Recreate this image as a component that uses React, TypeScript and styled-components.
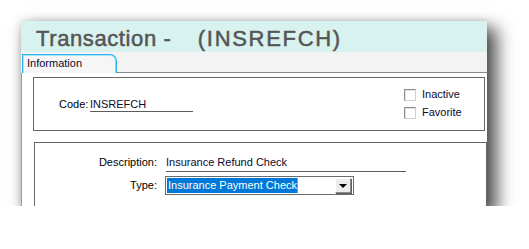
import React from "react";
import styled, { createGlobalStyle } from "styled-components";

const Global = createGlobalStyle`
  html, body { margin: 0; padding: 0; background: #ffffff; }
  body { font-family: "Liberation Sans", Arial, sans-serif; }
  * { box-sizing: border-box; }
`;

const Page = styled.div`
  padding: 21px 0 0 21px;
`;

const Window = styled.div`
  width: 466px;
  height: 185px;
  background: #ffffff;
  overflow: hidden;
  display: flex;
  flex-direction: column;
  box-shadow: 8px 9px 16px 2px rgba(0, 0, 0, 0.68), 0 0 7px rgba(0, 0, 0, 0.14);
`;

const TitleBar = styled.div`
  height: 31px;
  flex: none;
  background: #d8f2ef;
  padding: 4px 0 0 15px;
`;

const Title = styled.h1`
  margin: 0;
  font-family: "Liberation Sans", Arial, sans-serif;
  font-weight: 400;
  font-size: 22px;
  line-height: 27px;
  letter-spacing: 0.6px;
  color: #555555;
  -webkit-text-stroke: 0.5px #555555;
  white-space: pre;
`;

const TitleCode = styled.span`
  letter-spacing: 1.7px;
  margin-left: 13px;
`;

const TabStrip = styled.div`
  height: 21px;
  flex: none;
  display: flex;
  align-items: flex-end;
  background: #f3f3f3;
  padding-left: 1px;
`;

const Tab = styled.div`
  width: 95px;
  height: 19px;
  background: #f6f6f6;
  border: 1px solid #2bb3ea;
  border-bottom: none;
  border-top-right-radius: 7px;
  box-shadow: inset 1px 1px 0 #a6e6fa, inset -1px 0 0 #7dd6f5;
  padding: 2px 0 0 4px;
  font-size: 11px;
  line-height: 13px;
  color: #0a0a30;
`;

const StripFill = styled.div`
  flex: 1;
  height: 21px;
  border-bottom: 1px solid #8a8a8a;
`;

const Panel = styled.div`
  flex: 1;
  display: flex;
  flex-direction: column;
  gap: 11px;
  padding: 4px 0 0 11px;
  border-left: 1px solid #9c9c9c;
  background: #ffffff;
`;

const GroupBox = styled.div<{ $height: number; $shift?: number }>`
  width: ${(p) => 452 + (p.$shift ?? 0)}px;
  height: ${(p) => p.$height}px;
  flex: none;
  margin-left: ${(p) => p.$shift ?? 0}px;
  border: 1px solid #676767;
  font-size: 11px;
  line-height: 13px;
  color: #0a0a30;
`;

const CodeBox = styled(GroupBox)`
  display: flex;
`;

const CodeRow = styled.div`
  display: flex;
  align-items: flex-start;
  padding: 20px 0 0 25px;
`;

const CodeLabel = styled.span`
  width: 31px;
  color: #000000;
`;

const LineValue = styled.div<{ $width: number }>`
  width: ${(p) => p.$width}px;
  padding-bottom: 2px;
  border-bottom: 1px solid #5c5c5c;
`;

const CodeValue = styled(LineValue)`
  padding-bottom: 0;
`;

const CheckList = styled.div`
  margin-left: auto;
  width: 80px;
  padding-top: 11px;
  display: flex;
  flex-direction: column;
`;

const CheckRow = styled.label`
  height: 18px;
  display: flex;
  align-items: flex-start;
  color: #0a0a30;
`;

const CheckBox = styled.span`
  width: 12px;
  height: 12px;
  margin: 0 6px 0 0;
  background: #ffffff;
  border: 1px solid #8c8c8c;
  border-right-color: #cfcfcf;
  border-bottom-color: #cfcfcf;
  box-shadow: inset 1px 1px 0 #e4e4e4;
`;

const CheckText = styled.span`
  margin-top: -1px;
`;

const FieldBox = styled(GroupBox)`
  display: flex;
  flex-direction: column;
  padding-top: 13px;
`;

const FieldRow = styled.div<{ $top?: number }>`
  display: flex;
  align-items: center;
  margin-top: ${(p) => p.$top ?? 0}px;
`;

const FieldLabel = styled.span`
  width: 122px;
  text-align: right;
  margin-right: 9px;
  color: #000000;
  align-self: flex-start;
`;

const TypeLabel = styled(FieldLabel)`
  align-self: center;
`;

const Select = styled.div`
  width: 189px;
  height: 19px;
  border: 1px solid #6b6b6b;
  padding: 1px;
  display: flex;
  align-items: center;
  background: #ffffff;
  margin-left: -1px;
`;

const Selected = styled.span`
  background: #0078d7;
  color: #ffffff;
  height: 15px;
  line-height: 15px;
  padding: 0 0 0 1px;
  border-right: 1px solid #f08a24;
`;

const DropButton = styled.span`
  margin-left: auto;
  margin-right: 1px;
  width: 16px;
  height: 15px;
  background: #ececec;
  border: 1px solid #ffffff;
  border-right-color: #8a8a8a;
  border-bottom-color: #8a8a8a;
  box-shadow: 1px 1px 0 #5e5e5e;
  display: flex;
  align-items: center;
  justify-content: center;
`;

const Arrow = styled.span`
  width: 0;
  height: 0;
  border-left: 4px solid transparent;
  border-right: 4px solid transparent;
  border-top: 4px solid #000000;
  margin-top: 1px;
`;

export default function App() {
  return (
    <>
      <Global />
      <Page>
        <Window>
          <TitleBar>
            <Title>
              {"Transaction -  "}
              <TitleCode>(INSREFCH)</TitleCode>
            </Title>
          </TitleBar>
          <TabStrip>
            <Tab>Information</Tab>
            <StripFill />
          </TabStrip>
          <Panel>
            <CodeBox $height={54}>
              <CodeRow>
                <CodeLabel>Code:</CodeLabel>
                <CodeValue $width={103}>INSREFCH</CodeValue>
              </CodeRow>
              <CheckList>
                <CheckRow>
                  <CheckBox />
                  <CheckText>Inactive</CheckText>
                </CheckRow>
                <CheckRow>
                  <CheckBox />
                  <CheckText>Favorite</CheckText>
                </CheckRow>
              </CheckList>
            </CodeBox>
            <FieldBox $height={90} $shift={1}>
              <FieldRow>
                <FieldLabel>Description:</FieldLabel>
                <LineValue $width={240}>Insurance Refund Check</LineValue>
              </FieldRow>
              <FieldRow $top={4}>
                <TypeLabel>Type:</TypeLabel>
                <Select>
                  <Selected>Insurance Payment Check</Selected>
                  <DropButton>
                    <Arrow />
                  </DropButton>
                </Select>
              </FieldRow>
            </FieldBox>
          </Panel>
        </Window>
      </Page>
    </>
  );
}
